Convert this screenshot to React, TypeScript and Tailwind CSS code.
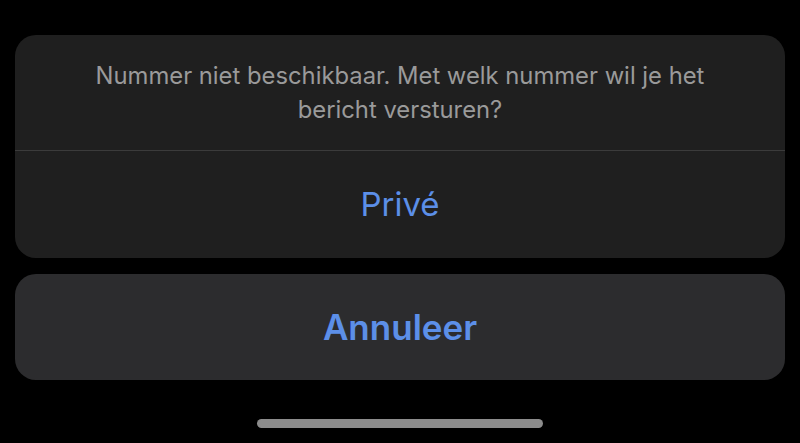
export default function App() {
  return (
    <div
      className="flex h-[443px] w-[800px] flex-col bg-black px-[15px] pt-[35px]"
      style={{ fontFamily: "Inter, 'Noto Sans', sans-serif" }}
    >
      <div className="flex flex-col overflow-hidden rounded-[21px] bg-[#1f1f1f]">
        <div className="flex h-[115px] items-center justify-center px-8 text-center">
          <p className="text-[23.8px] leading-[34px] text-[#9a9a9a]">
            Nummer niet beschikbaar. Met welk nummer wil je het
            <br />
            bericht versturen?
          </p>
        </div>
        <div className="h-px bg-[#3b3b3b]" />
        <button
          type="button"
          className="flex h-[107px] items-center justify-center text-[33px] text-[#5c8fe8]"
        >
          Privé
        </button>
      </div>
      <button
        type="button"
        className="mt-[16px] flex h-[106px] items-center justify-center rounded-[21px] bg-[#2c2c2e] text-[35px] font-semibold text-[#5c8fe8]"
      >
        Annuleer
      </button>
      <div className="mt-[39px] flex justify-center">
        <div className="h-[9px] w-[286px] rounded-full bg-[#8c8c8c]" />
      </div>
    </div>
  );
}
